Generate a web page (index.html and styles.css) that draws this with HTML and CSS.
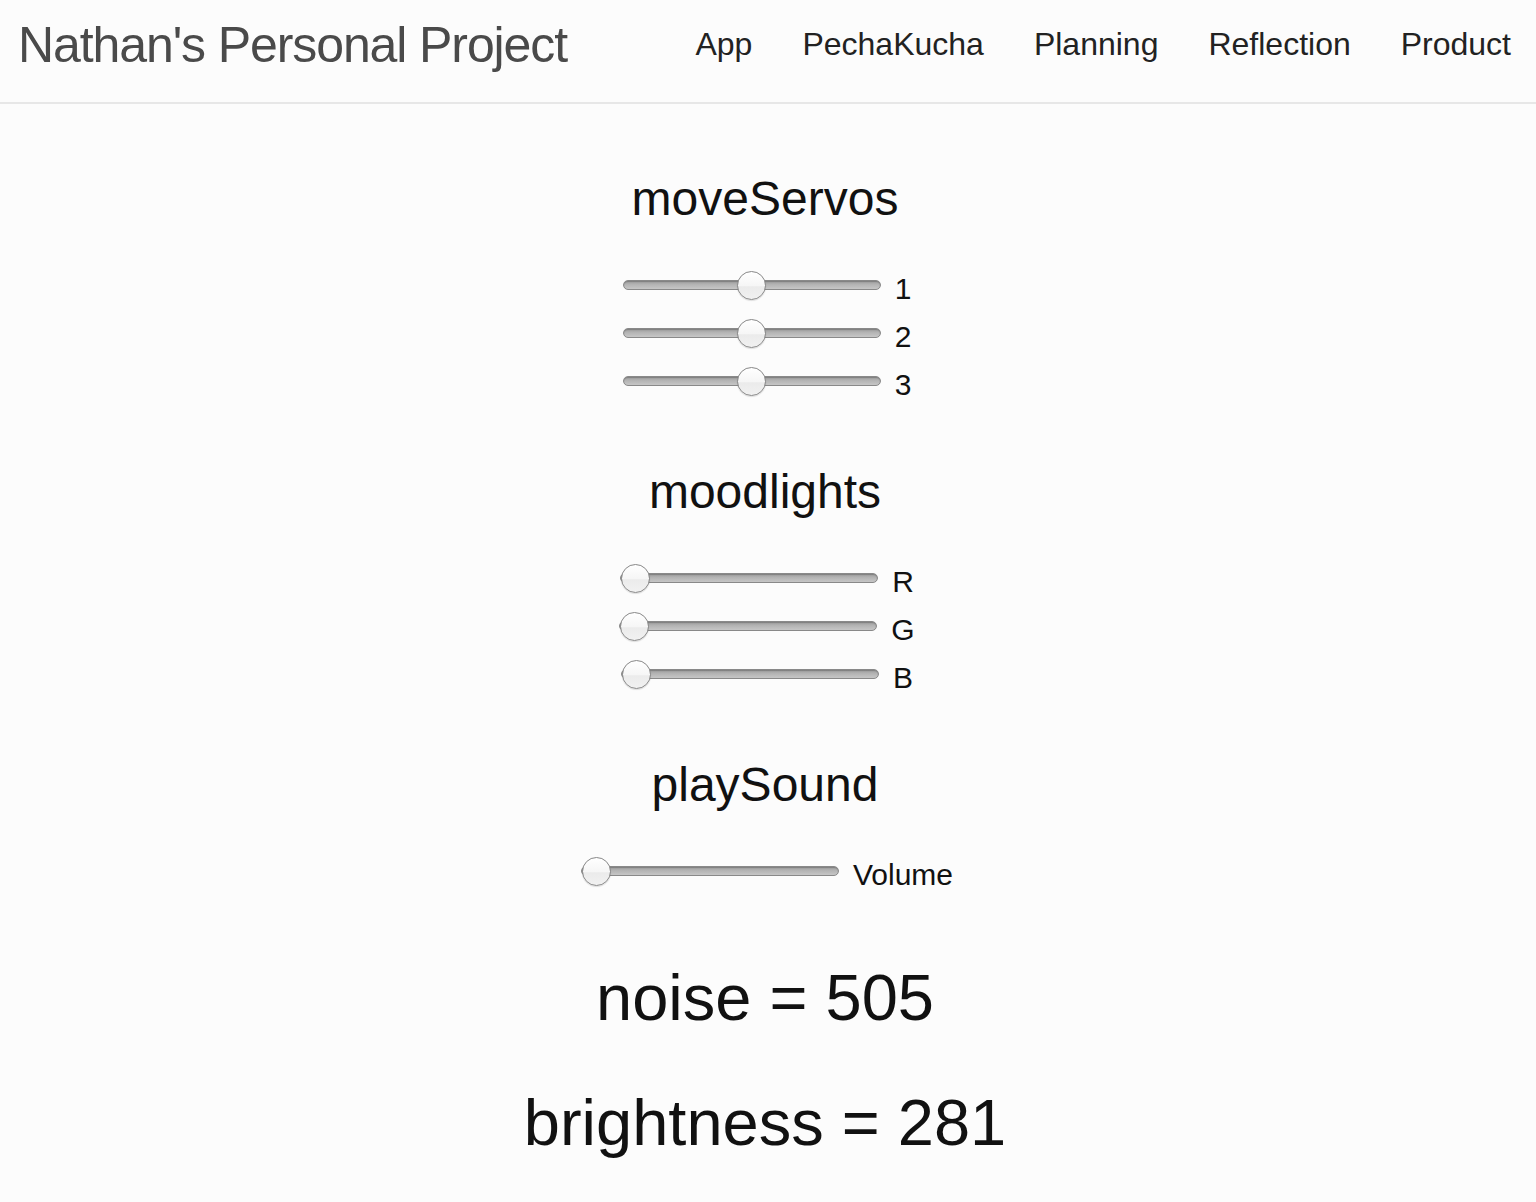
FILE: index.html
```html
<!DOCTYPE html>
<html lang="en">
<head>
<meta charset="utf-8">
<title>Nathan's Personal Project</title>
<link rel="stylesheet" href="styles.css">
</head>
<body>
<header class="navbar">
  <a class="brand" href="#">Nathan's Personal Project</a>
  <nav class="nav">
    <a href="#">App</a>
    <a href="#">PechaKucha</a>
    <a href="#">Planning</a>
    <a href="#">Reflection</a>
    <a href="#">Product</a>
  </nav>
</header>
<main class="main">
  <section class="group">
    <h2 class="group-title">moveServos</h2>
    <div class="row"><input type="range" min="0" max="100" value="50"><span class="label">1</span></div>
    <div class="row"><input type="range" min="0" max="100" value="50"><span class="label">2</span></div>
    <div class="row"><input type="range" min="0" max="100" value="50"><span class="label">3</span></div>
  </section>
  <section class="group">
    <h2 class="group-title">moodlights</h2>
    <div class="row"><input type="range" min="0" max="255" value="0"><span class="label">R</span></div>
    <div class="row"><input type="range" min="0" max="255" value="0"><span class="label">G</span></div>
    <div class="row"><input type="range" min="0" max="255" value="0"><span class="label">B</span></div>
  </section>
  <section class="group">
    <h2 class="group-title">playSound</h2>
    <div class="row"><input type="range" min="0" max="100" value="0"><span class="label">Volume</span></div>
  </section>
  <p class="readout">noise = 505</p>
  <p class="readout readout-second">brightness = 281</p>
</main>
</body>
</html>
```

FILE: styles.css
```css
html, body {
  margin: 0;
  padding: 0;
  background: #fcfcfc;
}

body {
  font-family: "Liberation Sans", Arial, sans-serif;
  color: #111;
}

.navbar {
  height: 102px;
  border-bottom: 2px solid #e7e7e7;
  background: #fcfcfc;
  display: flex;
  justify-content: space-between;
  align-items: flex-start;
}

.brand {
  display: block;
  padding: 16px 0 0 18px;
  font-size: 50px;
  line-height: 58px;
  letter-spacing: -1.1px;
  color: #4a4a4a;
  text-decoration: none;
}

.nav {
  display: flex;
  padding-top: 26px;
}

.nav a {
  display: block;
  padding: 0 25px;
  font-size: 32px;
  line-height: 36px;
  color: #222;
  text-decoration: none;
}

.main {
  padding: 0 6px 0 0;
  text-align: center;
}

.group {
  padding-top: 59px;
}

.group:first-child {
  padding-top: 67px;
}

.group-title {
  margin: 0 0 34px;
  font-size: 48px;
  line-height: 56px;
  font-weight: normal;
}

.row {
  height: 48px;
  display: flex;
  justify-content: center;
  align-items: center;
  gap: 10px;
}

.label {
  font-size: 30px;
  line-height: 30px;
  margin-top: 8px;
}

input[type="range"] {
  -webkit-appearance: none;
  appearance: none;
  width: 258px;
  height: 30px;
  margin: 0 4px;
  padding: 0;
  background: transparent;
}

input[type="range"]::-webkit-slider-runnable-track {
  box-sizing: border-box;
  height: 10px;
  border: 1px solid #898989;
  border-radius: 5px;
  background: linear-gradient(#9c9c9c, #b4b4b4 45%, #c6c6c6);
  box-shadow: inset 0 1px 1px rgba(0, 0, 0, 0.2);
}

input[type="range"]::-webkit-slider-thumb {
  -webkit-appearance: none;
  appearance: none;
  box-sizing: border-box;
  width: 29px;
  height: 29px;
  margin-top: -10.5px;
  border-radius: 50%;
  border: 1.5px solid #888;
  background: linear-gradient(#ffffff, #f6f6f6 50%, #ebebeb 55%, #f1f1f1);
  box-shadow: 0 1px 1px rgba(0, 0, 0, 0.12);
}

.readout {
  margin: 65px 0 0;
  font-size: 65px;
  line-height: 76px;
}

.readout-second {
  margin-top: 49px;
}
```
